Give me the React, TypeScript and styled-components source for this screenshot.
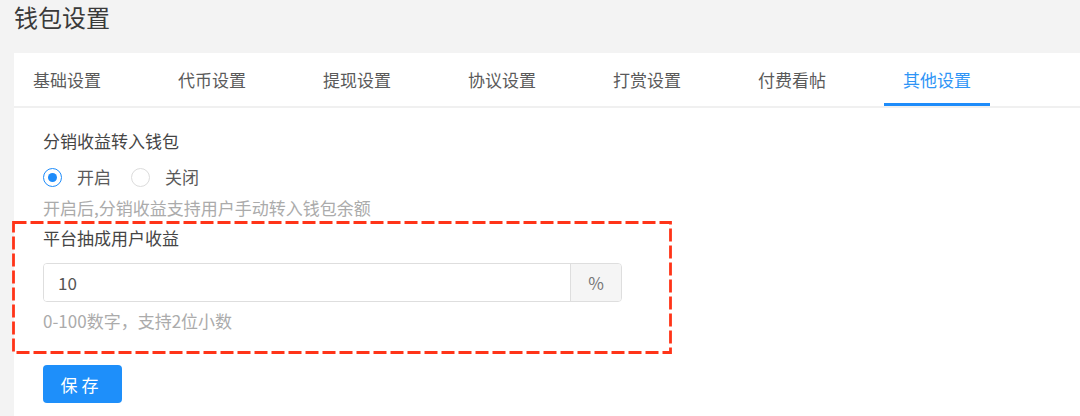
import React from "react";
import styled, { createGlobalStyle } from "styled-components";

const Global = createGlobalStyle`
  html, body { margin: 0; padding: 0; }
  body {
    background: #f3f3f3;
    font-family: "Noto Sans CJK SC", "Noto Sans", sans-serif;
    color: #333;
    overflow: hidden;
  }
`;

const Page = styled.div`
  padding-left: 14px;
  width: 1066px;
  overflow: hidden;
`;

const Title = styled.h1`
  margin: 0;
  font-size: 24px;
  font-weight: 400;
  line-height: 34px;
  color: #3a3a3a;
  height: 34px;
`;

const Card = styled.div`
  margin-top: 19px;
  background: #fff;
  min-height: 363px;
`;

const TabBar = styled.div`
  display: flex;
  border-bottom: 2px solid #f0f0f0;
`;

const Tab = styled.div<{ $active?: boolean }>`
  box-sizing: border-box;
  height: 53px;
  padding: 4px 19px 0;
  margin-right: 39px;
  display: flex;
  align-items: center;
  font-size: 17px;
  line-height: 24px;
  color: ${(p) => (p.$active ? "#2f95f6" : "#5a5a5a")};
  border-bottom: 3px solid ${(p) => (p.$active ? "#1e8cfa" : "transparent")};
  white-space: nowrap;
`;

const Content = styled.div`
  padding: 21px 0 0 29px;
  display: flex;
  flex-direction: column;
  align-items: flex-start;
`;

const Label = styled.div<{ $top?: number }>`
  font-size: 17px;
  line-height: 24px;
  color: #454545;
  margin-top: ${(p) => p.$top ?? 0}px;
`;

const Help = styled.div<{ $top?: number }>`
  font-size: 17px;
  line-height: 24px;
  color: #ababab;
  margin-top: ${(p) => p.$top ?? 0}px;
`;

const RadioGroup = styled.div`
  display: flex;
  align-items: center;
  margin-top: 12px;
  height: 24px;
  gap: 20px;
`;

const RadioItem = styled.label`
  display: flex;
  align-items: center;
  gap: 15px;
  font-size: 17px;
  line-height: 24px;
  color: #5a5a5a;
`;

const RadioCircle = styled.span<{ $checked?: boolean }>`
  box-sizing: border-box;
  width: 19px;
  height: 19px;
  border-radius: 50%;
  border: 1px solid ${(p) => (p.$checked ? "#1e8cfa" : "#dcdcdc")};
  display: flex;
  align-items: center;
  justify-content: center;
  &::after {
    content: "";
    width: 9px;
    height: 9px;
    border-radius: 50%;
    background: ${(p) => (p.$checked ? "#1e8cfa" : "transparent")};
  }
`;

const Marked = styled.div`
  position: relative;
  margin-top: 6px;
  display: flex;
  flex-direction: column;
  width: 579px;
`;

const DashedFrame = styled.svg`
  position: absolute;
  left: -31px;
  top: -5px;
  width: 660px;
  height: 133px;
  overflow: visible;
  pointer-events: none;
`;

const InputGroup = styled.div`
  margin-top: 13px;
  display: flex;
  height: 39px;
  box-sizing: border-box;
  border: 1px solid #dedede;
  border-radius: 4px;
  overflow: hidden;
`;

const Input = styled.input`
  flex: 1;
  border: none;
  outline: none;
  padding: 0 14px;
  font-family: inherit;
  font-size: 17px;
  color: #555;
  background: #fff;
`;

const Addon = styled.div`
  width: 50px;
  background: #f5f5f5;
  border-left: 1px solid #dedede;
  display: flex;
  align-items: center;
  justify-content: center;
  font-size: 17px;
  color: #777;
`;

const SaveButton = styled.button`
  margin-top: 32px;
  width: 79px;
  height: 38px;
  border: none;
  border-radius: 4px;
  background: #1e8ffa;
  color: #fff;
  font-family: inherit;
  font-size: 17px;
  letter-spacing: 4px;
  padding-left: 4px;
`;

const tabs = ["基础设置", "代币设置", "提现设置", "协议设置", "打赏设置", "付费看帖", "其他设置"];

export default function App() {
  return (
    <Page>
      <Global />
      <Title>钱包设置</Title>
      <Card>
        <TabBar>
          {tabs.map((t, i) => (
            <Tab key={t} $active={i === tabs.length - 1}>
              {t}
            </Tab>
          ))}
        </TabBar>
        <Content>
          <Label>分销收益转入钱包</Label>
          <RadioGroup>
            <RadioItem>
              <RadioCircle $checked />
              开启
            </RadioItem>
            <RadioItem>
              <RadioCircle />
              关闭
            </RadioItem>
          </RadioGroup>
          <Help $top={7}>开启后,分销收益支持用户手动转入钱包余额</Help>
          <Marked>
            <DashedFrame viewBox="0 0 660 133">
              <rect
                x="1.5"
                y="1.5"
                width="657"
                height="130"
                fill="none"
                stroke="#ff3418"
                strokeWidth="2.8"
                strokeDasharray="13 4"
              />
            </DashedFrame>
            <Label>平台抽成用户收益</Label>
            <InputGroup>
              <Input defaultValue="10" />
              <Addon>%</Addon>
            </InputGroup>
            <Help $top={7}>0-100数字，支持2位小数</Help>
          </Marked>
          <SaveButton>保存</SaveButton>
        </Content>
      </Card>
    </Page>
  );
}
